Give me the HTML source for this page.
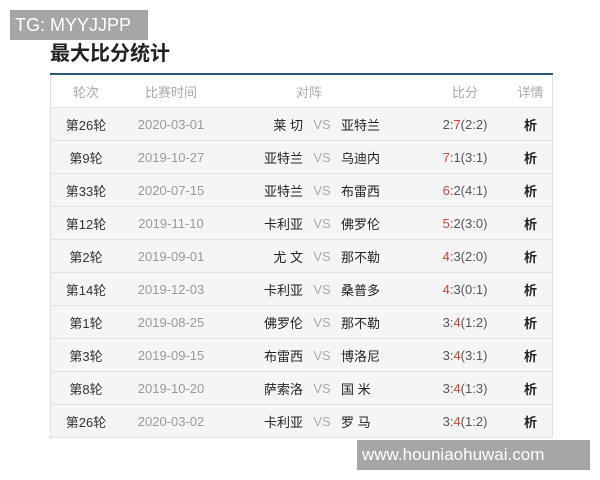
<!DOCTYPE html>
<html><head><meta charset="utf-8"><style>
body{margin:0;width:600px;height:480px;background:#fff;font-family:"Liberation Sans","Noto Sans CJK SC",sans-serif;position:relative;overflow:hidden}
.wm{position:absolute;background:#a6a6a6;color:#fff;font-size:18px;line-height:30px;padding-left:5px}
h1{position:absolute;left:50px;top:40px;margin:0;font-size:20px;font-weight:bold;color:#222;line-height:28px}
table{position:absolute;left:50px;top:73px;width:503px;border-collapse:collapse;border-top:2px solid #2d5a7a;border-left:1px solid #e0e0e0;border-right:1px solid #e0e0e0;font-size:13px}
td,th{height:32px;border-bottom:1px solid #e2e2e2;padding:0;font-weight:normal}
th{color:#aaa !important;background:#fff}
tr.r td{background:#f5f5f5}
.c1{width:70px;text-align:center;color:#333}
.c2{width:100px;text-align:center;color:#999}
.h{width:82px;text-align:right;color:#222}
.vs{width:38px;text-align:center;color:#aaa}
.a{width:80px;text-align:left;color:#222}
.s{width:88px;text-align:center;color:#555}
.d{text-align:center;color:#222;font-weight:bold}
.red{color:#d9412e}
</style></head><body>
<div class="wm" style="left:10px;top:10px;width:133px;height:30px">TG: MYYJJPP</div>
<h1>最大比分统计</h1>
<table>
<tr><th class="c1">轮次</th><th class="c2">比赛时间</th><th colspan="3" style="text-align:left;padding-left:0"><span style="position:relative;left:75px">对阵</span></th><th class="s">比分</th><th>详情</th></tr>
<tr class="r"><td class="c1">第26轮</td><td class="c2">2020-03-01</td><td class="h">莱 切</td><td class="vs">VS</td><td class="a">亚特兰</td><td class="s">2:<span class="red">7</span>(2:2)</td><td class="d">析</td></tr>
<tr class="r"><td class="c1">第9轮</td><td class="c2">2019-10-27</td><td class="h">亚特兰</td><td class="vs">VS</td><td class="a">乌迪内</td><td class="s"><span class="red">7</span>:1(3:1)</td><td class="d">析</td></tr>
<tr class="r"><td class="c1">第33轮</td><td class="c2">2020-07-15</td><td class="h">亚特兰</td><td class="vs">VS</td><td class="a">布雷西</td><td class="s"><span class="red">6</span>:2(4:1)</td><td class="d">析</td></tr>
<tr class="r"><td class="c1">第12轮</td><td class="c2">2019-11-10</td><td class="h">卡利亚</td><td class="vs">VS</td><td class="a">佛罗伦</td><td class="s"><span class="red">5</span>:2(3:0)</td><td class="d">析</td></tr>
<tr class="r"><td class="c1">第2轮</td><td class="c2">2019-09-01</td><td class="h">尤 文</td><td class="vs">VS</td><td class="a">那不勒</td><td class="s"><span class="red">4</span>:3(2:0)</td><td class="d">析</td></tr>
<tr class="r"><td class="c1">第14轮</td><td class="c2">2019-12-03</td><td class="h">卡利亚</td><td class="vs">VS</td><td class="a">桑普多</td><td class="s"><span class="red">4</span>:3(0:1)</td><td class="d">析</td></tr>
<tr class="r"><td class="c1">第1轮</td><td class="c2">2019-08-25</td><td class="h">佛罗伦</td><td class="vs">VS</td><td class="a">那不勒</td><td class="s">3:<span class="red">4</span>(1:2)</td><td class="d">析</td></tr>
<tr class="r"><td class="c1">第3轮</td><td class="c2">2019-09-15</td><td class="h">布雷西</td><td class="vs">VS</td><td class="a">博洛尼</td><td class="s">3:<span class="red">4</span>(3:1)</td><td class="d">析</td></tr>
<tr class="r"><td class="c1">第8轮</td><td class="c2">2019-10-20</td><td class="h">萨索洛</td><td class="vs">VS</td><td class="a">国 米</td><td class="s">3:<span class="red">4</span>(1:3)</td><td class="d">析</td></tr>
<tr class="r"><td class="c1">第26轮</td><td class="c2">2020-03-02</td><td class="h">卡利亚</td><td class="vs">VS</td><td class="a">罗 马</td><td class="s">3:<span class="red">4</span>(1:2)</td><td class="d">析</td></tr>
</table>
<div class="wm" style="left:357px;top:440px;width:228px;height:30px;font-size:17px">www.houniaohuwai.com</div>
</body></html>
